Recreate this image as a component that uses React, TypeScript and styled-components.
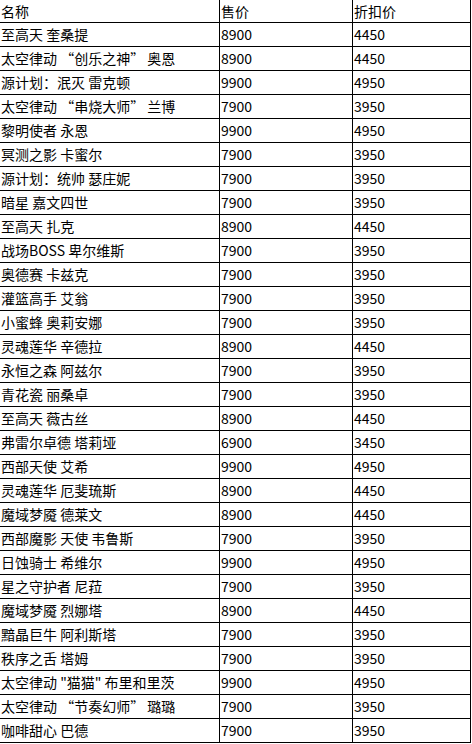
import React from 'react'
import styled, { createGlobalStyle } from 'styled-components'

interface IItem {
    name: string
    price: number
    discount: number
}

const items: IItem[] = [
    { name: '至高天 奎桑提', price: 8900, discount: 4450 },
    { name: '太空律动 “创乐之神” 奥恩', price: 8900, discount: 4450 },
    { name: '源计划：泯灭 雷克顿', price: 9900, discount: 4950 },
    { name: '太空律动 “串烧大师” 兰博', price: 7900, discount: 3950 },
    { name: '黎明使者 永恩', price: 9900, discount: 4950 },
    { name: '冥测之影 卡蜜尔', price: 7900, discount: 3950 },
    { name: '源计划：统帅 瑟庄妮', price: 7900, discount: 3950 },
    { name: '暗星 嘉文四世', price: 7900, discount: 3950 },
    { name: '至高天 扎克', price: 8900, discount: 4450 },
    { name: '战场BOSS 卑尔维斯', price: 7900, discount: 3950 },
    { name: '奥德赛 卡兹克', price: 7900, discount: 3950 },
    { name: '灌篮高手 艾翁', price: 7900, discount: 3950 },
    { name: '小蜜蜂 奥莉安娜', price: 7900, discount: 3950 },
    { name: '灵魂莲华 辛德拉', price: 8900, discount: 4450 },
    { name: '永恒之森 阿兹尔', price: 7900, discount: 3950 },
    { name: '青花瓷 丽桑卓', price: 7900, discount: 3950 },
    { name: '至高天 薇古丝', price: 8900, discount: 4450 },
    { name: '弗雷尔卓德 塔莉垭', price: 6900, discount: 3450 },
    { name: '西部天使 艾希', price: 9900, discount: 4950 },
    { name: '灵魂莲华 厄斐琉斯', price: 8900, discount: 4450 },
    { name: '魔域梦魇 德莱文', price: 8900, discount: 4450 },
    { name: '西部魔影 天使 韦鲁斯', price: 7900, discount: 3950 },
    { name: '日蚀骑士 希维尔', price: 9900, discount: 4950 },
    { name: '星之守护者 尼菈', price: 7900, discount: 3950 },
    { name: '魔域梦魇 烈娜塔', price: 8900, discount: 4450 },
    { name: '黯晶巨牛 阿利斯塔', price: 7900, discount: 3950 },
    { name: '秩序之舌 塔姆', price: 7900, discount: 3950 },
    { name: '太空律动 "猫猫" 布里和里茨', price: 9900, discount: 4950 },
    { name: '太空律动 “节奏幻师” 璐璐', price: 7900, discount: 3950 },
    { name: '咖啡甜心 巴德', price: 7900, discount: 3950 },
]

const GlobalStyle = createGlobalStyle`
    html, body {
        margin:0;
        padding:0;
        background:#fff;
    }
    body {
        font-family:"Noto Sans CJK SC", "Liberation Sans", sans-serif;
        color:#000;
    }
`

const Table = styled.div`
    display:grid;
    grid-template-columns:220px 133px 118px;
    width:471px;
`

const Cell = styled.div<{ $header?: boolean }>`
    height:${p => (p.$header ? '22px' : '23px')};
    line-height:${p => (p.$header ? '22px' : '23px')};
    border-right:1px solid #000;
    border-bottom:1px solid #000;
    padding-left:1px;
    font-size:14px;
    white-space:nowrap;
    overflow:hidden;
`

const App: React.FC = () => {
    return <>
        <GlobalStyle />
        <Table>
            <Cell $header>名称</Cell>
            <Cell $header>售价</Cell>
            <Cell $header>折扣价</Cell>
            {items.map((item, i) => {
                return <React.Fragment key={i}>
                    <Cell>{item.name}</Cell>
                    <Cell>{item.price}</Cell>
                    <Cell>{item.discount}</Cell>
                </React.Fragment>
            })}
        </Table>
    </>
}

export default App
